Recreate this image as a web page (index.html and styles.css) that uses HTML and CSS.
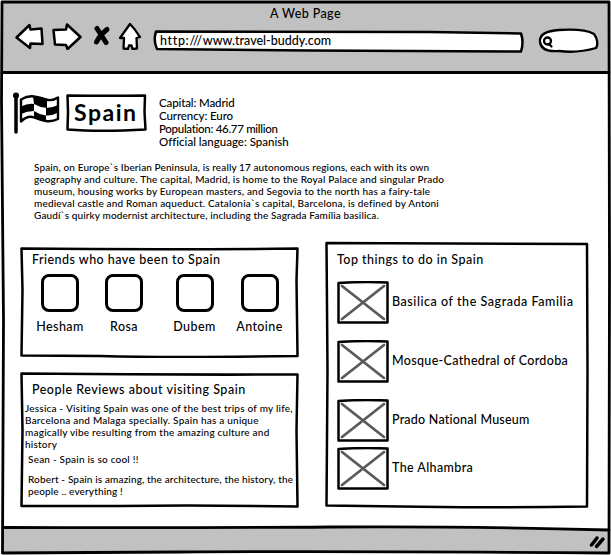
FILE: index.html
```html
<!DOCTYPE html>
<html lang="en">
<head>
<meta charset="utf-8">
<title>A Web Page</title>
<link rel="stylesheet" href="styles.css">
</head>
<body>
<div class="window">
  <svg class="outline" viewBox="0 0 611 555" aria-hidden="true">
    <path class="chrome" d="M3 2H609V73H3zM3 528Q200 526 400 527T609 530V552H3z"/>
    <path class="rule" d="M2 2Q300 1 609 2L609.500 270L609 553Q350 551 180 552L2.500 553L3.500 320L1.500 100z"/>
    <path class="rule" d="M2 72.500H609M3 527.500Q200 528 330 527T609 530"/>
  </svg>
  <header class="header">
    <h1 class="title">A Web Page</h1>
    <nav class="toolbar">
      <svg class="icon back" width="30" height="28" viewBox="15 22 30 28"><path d="M16.500 37.500L29.500 25L30.500 29.500L41.500 28.500L42.500 44L30.500 43.500L30 48z"/></svg>
      <svg class="icon forward" width="30" height="28" viewBox="52 22 30 28"><path d="M53.500 30L66 29.500L67 24.500L80.500 37L67.500 49L66 45L55 44.500z"/></svg>
      <svg class="icon stop" width="18" height="28" viewBox="93 22 18 28"><path d="M97 28.500L106 42.500M107 29.500Q100 35 96.500 42"/></svg>
      <svg class="icon home" width="24" height="28" viewBox="118 22 24 28"><path d="M130 24Q135 29 140 37L136.500 38L137 48.500L132.500 49L131.500 45.500L129 45.500L128 49L123.500 48.500L124 38L120 38z"/></svg>
      <div class="url">
        <svg class="outline" viewBox="153 29 372 24" aria-hidden="true"><path class="field" d="M156 31.500L430 32L521 33.500Q524 42 521 51.500L310 50.500L157 49Q153 41 156 31.500z"/></svg>
        <span class="url-text"><span class="scheme">http:///</span>www.travel-buddy.com</span>
      </div>
      <svg class="icon search" width="62" height="28" viewBox="538 27 62 28"><path d="M540 42C539 34 547 31 559 30C575 29 587 30 594 34C598 39 598 45 596 48C589 50 574 53 559 51C547 52 541 49 540 42z"/><path d="M547.500 37.500A3.500 3.500 0 1 0 547.500 44.500A3.500 3.500 0 1 0 547.500 37.500zM549 44L551.500 46.500"/></svg>
    </nav>
  </header>
  <main class="content">
    <section class="intro">
      <svg class="flag" width="52" height="42" viewBox="10 92 52 42"><path class="pole" d="M16 96V132"/><circle cx="16" cy="95.500" r="3"/><path class="cloth" d="M21 99.500Q28 95.500 34 96.500T46 99.500T58 97.500V119Q52 122 46 121T34 117.500T21 121.500z"/><path d="M33 96Q40 99 47 99V108Q40 107.500 34 104zM21 106.500Q28 103 34 104V111Q27 111 21 114zM46 108Q52 108 58 105V112.500Q52 116 46 115.500zM34 111Q40 115 46 115.500V122Q39 120 34 118z"/></svg>
      <div class="country">
        <svg class="outline" viewBox="65 93 83 40" aria-hidden="true"><path d="M67.500 95.500Q110 96 145 95.500L144.500 112L145.500 129.500Q100 132 67.500 129.500L68 112z"/></svg>
        <h2>Spain</h2>
      </div>
      <ul class="facts"><li class="f1">Capital: Madrid</li><li class="f2">Currency: Euro</li><li class="f3">Population: 46.77 million</li><li class="f4">Official language: Spanish</li></ul>
    </section>
    <p class="about small"><span class="a1">Spain, on Europe`s Iberian Peninsula, is really 17 autonomous regions, each with its own</span><br><span class="a2">geography and culture. The capital, Madrid, is home to the Royal Palace and singular Prado</span><br><span class="a3">museum, housing works by European masters, and Segovia to the north has a fairy-tale</span><br><span class="a4">medieval castle and Roman aqueduct. Catalonia`s capital, Barcelona, is defined by Antoni</span><br><span class="a5">Gaudí`s quirky modernist architecture, including the Sagrada Família basilica.</span></p>
    <div class="columns">
      <div class="left">
        <section class="card friends">
          <svg class="outline" viewBox="20 246 280 112" aria-hidden="true"><path d="M21.500 248.500Q160 250 297.500 248.500L296.500 280L297.500 356Q170 358 100 356L21.500 355.500L22.500 290z"/></svg>
          <h3>Friends who have been to Spain</h3>
          <ul class="people">
            <li><span class="avatar"></span>Hesham</li><li><span class="avatar"></span>Rosa</li><li><span class="avatar"></span>Dubem</li><li><span class="avatar"></span>Antoine</li>
          </ul>
        </section>
        <section class="card reviews">
          <svg class="outline" viewBox="20 372 280 136" aria-hidden="true"><path d="M21.500 373.500Q160 375 297.500 374.500L296.500 430L297.500 506.500Q200 505 120 506L21.500 506L22.500 430z"/></svg>
          <h3>People Reviews about visiting Spain</h3>
          <p class="small jessica">Jessica - Visiting Spain was one of the best trips of my life,<br>Barcelona and Malaga specially. Spain has a unique<br>magically vibe resulting from the amazing culture and<br>history</p>
          <p class="small sean">Sean - Spain is so cool !!</p>
          <p class="small robert">Robert - Spain is amazing, the architecture, the history, the<br>people .. everything !</p>
        </section>
      </div>
      <section class="card places">
        <svg class="outline" viewBox="325 241 266 268" aria-hidden="true"><path d="M326.500 243Q450 244 587 244L587.500 370L587 506.500Q480 508 400 506.500L326.500 505.500L327.500 370z"/></svg>
        <h3>Top things to do in Spain</h3>
        <ul>
          <li><svg class="photo" width="52" height="43" viewBox="0 0 52 43"><path class="box" d="M1.500 2Q25 .5 50.500 1.500V41.500H1.500z"/><path class="cross" d="M5 5L47 38M47 5L5 38"/></svg><span class="p1">Basilica of the Sagrada Familia</span></li>
          <li><svg class="photo" width="52" height="43" viewBox="0 0 52 43"><path class="box" d="M1.500 2Q25 .5 50.500 1.500V41.500H1.500z"/><path class="cross" d="M5 5L47 38M47 5L5 38"/></svg><span class="p2">Mosque-Cathedral of Cordoba</span></li>
          <li><svg class="photo" width="52" height="43" viewBox="0 0 52 43"><path class="box" d="M1.500 2Q25 .5 50.500 1.500V41.500H1.500z"/><path class="cross" d="M5 5L47 38M47 5L5 38"/></svg><span class="p3">Prado National Museum</span></li>
          <li><svg class="photo" width="52" height="43" viewBox="0 0 52 43"><path class="box" d="M1.500 2Q25 .5 50.500 1.500V41.500H1.500z"/><path class="cross" d="M5 5L47 38M47 5L5 38"/></svg><span class="p4">The Alhambra</span></li>
        </ul>
      </section>
    </div>
  </main>
  <footer class="footer"><svg width="18" height="16" viewBox="588 534 18 16"><path d="M591.500 545L597 538M596.500 546.500L603 539"/></svg></footer>
</div>
</body>
</html>
```
FILE: styles.css
```css
* { box-sizing: border-box; }
body { margin: 0; background: #fff; color: #000; font: 500 12.5px/13px Lato, "Liberation Sans", sans-serif; font-variant-ligatures: none; }
h1, h2, h3, p, ul { margin: 0; padding: 0; font: inherit; }
ul { list-style: none; }
svg { display: block; flex: none; stroke: #000; stroke-width: 2.5; stroke-linejoin: round; stroke-linecap: round; fill: none; }
.window { position: relative; isolation: isolate; width: 611px; height: 555px; display: grid; grid-template-rows: 73px 454px 28px; overflow: hidden; }
.outline { position: absolute; inset: 0; width: 100%; height: 100%; z-index: -1; }
.chrome { fill: #c1c1c1; stroke: none; }
.rule { stroke-width: 2.8; }
.title { padding-top: 6px; height: 22px; line-height: 15px; text-align: center; letter-spacing: .4px; }
.toolbar { display: flex; padding-left: 15px; }
.icon { fill: #fff; }
.forward { margin-left: 7px; }
.stop { margin-left: 11px; stroke-width: 5; fill: none; }
.home { margin-left: 7px; stroke-width: 2.3; }
.url { position: relative; width: 372px; height: 24px; margin: 7px 0 0 11px; }
.field { fill: #fff; }
.url-text { display: block; padding: 4px 0 0 7px; line-height: 16px; }
.scheme { letter-spacing: .65px; }
.search { margin: 5px 0 0 13px; stroke-width: 2.3; }
.intro { display: flex; height: 88px; padding: 19px 0 0 10px; }
.flag { stroke-width: 2; }
.flag path, .flag circle { fill: #000; stroke: none; }
.flag .pole { stroke: #000; stroke-width: 3.5; }
.flag .cloth { fill: #fff; stroke: #000; stroke-width: 2.4; }
.country { position: relative; width: 83px; height: 40px; margin: 1px 0 0 3px; }
.country h2 { padding-left: 9px; font-size: 23px; font-weight: 700; line-height: 38px; letter-spacing: 1.5px; }
.facts { margin: 4px 0 0 11px; font-size: 11.5px; }
.f1 { letter-spacing: -.12px; }
.f2 { letter-spacing: -.1px; }
.f3 { letter-spacing: -.3px; }
.small { font-size: 10px; line-height: 12px; }
.about { padding-left: 34px; height: 81px; white-space: nowrap; }
.a1 { letter-spacing: .11px; }
.a2 { letter-spacing: .16px; }
.a3 { letter-spacing: .19px; }
.a4 { letter-spacing: .18px; }
.a5 { letter-spacing: .12px; }
.columns { display: flex; gap: 25px; padding-left: 20px; margin-top: -1px; }
.left { width: 280px; padding-top: 5px; }
.card { position: relative; }
.card h3 { letter-spacing: .46px; }
.friends { height: 112px; padding: 7px 0 0 12px; }
.people { display: grid; grid-template-columns: 64px 64px 77px 53px; margin: 8px 0 0 -4px; letter-spacing: .4px; }
.people li { display: flex; flex-direction: column; align-items: center; gap: 8px; }
.avatar { width: 38px; height: 38px; border: 3px solid #000; border-radius: 8px; }
.reviews { height: 136px; margin-top: 14px; padding-top: 11px; white-space: nowrap; }
.reviews h3 { padding-left: 12px; letter-spacing: .5px; }
.jessica { padding: 6px 0 0 5px; letter-spacing: .22px; }
.sean { padding: 3px 0 0 8px; letter-spacing: .22px; }
.robert { padding: 8px 0 0 8px; letter-spacing: .14px; }
.places { width: 266px; height: 268px; padding: 12px 0 0 12px; }
.places ul { display: grid; grid-template-rows: 59px 59px 48px 43px; margin-top: 15px; }
.places li { display: flex; gap: 3px; }
.places span { line-height: 41px; white-space: nowrap; }
.p1 { letter-spacing: .55px; }
.p2 { letter-spacing: .33px; }
.p3 { letter-spacing: .22px; }
.p4 { letter-spacing: .4px; }
.cross { stroke: #5a5a5a; stroke-width: 2.8; }
.footer { display: flex; padding: 7px 0 0 588px; }
.footer svg { stroke-width: 3.5; }
```
